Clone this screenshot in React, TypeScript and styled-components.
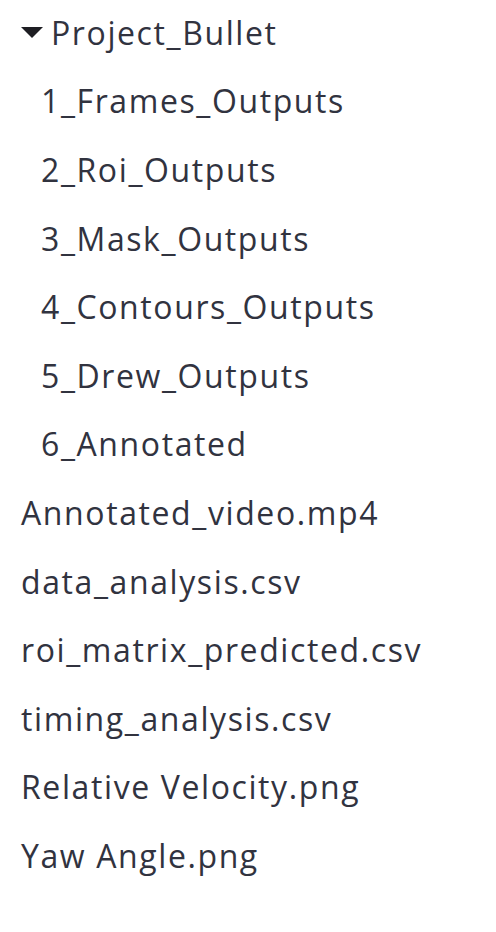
import React from "react";
import styled, { createGlobalStyle } from "styled-components";

const Global = createGlobalStyle`
  html, body { margin: 0; padding: 0; background: #ffffff; }
  body { font-family: "Open Sans", "Liberation Sans", sans-serif; }
`;

const Tree = styled.ul`
  list-style: none;
  margin: -2px 0 0 0;
  padding: 0;
  display: flex;
  flex-direction: column;
`;

const Row = styled.li<{ $indent: number }>`
  height: 68.6px;
  display: flex;
  align-items: center;
  gap: 8px;
  padding-left: ${(p) => p.$indent}px;
  font-size: 32px;
  letter-spacing: 1.6px;
  color: rgb(49, 51, 63);
  white-space: nowrap;
`;

const Caret = styled.svg`
  width: 22px;
  height: 11px;
  flex: none;
  margin-top: 1px;
`;

const folders = [
  "1_Frames_Outputs",
  "2_Roi_Outputs",
  "3_Mask_Outputs",
  "4_Contours_Outputs",
  "5_Drew_Outputs",
  "6_Annotated",
];

const files = [
  "Annotated_video.mp4",
  "data_analysis.csv",
  "roi_matrix_predicted.csv",
  "timing_analysis.csv",
  "Relative Velocity.png",
  "Yaw Angle.png",
];

export default function App() {
  return (
    <>
      <Global />
      <Tree>
        <Row $indent={21}>
          <Caret viewBox="0 0 22 11">
            <polygon points="0,0 22,0 11,11" fill="rgb(30,30,35)" />
          </Caret>
          <span>Project_Bullet</span>
        </Row>
        {folders.map((f) => (
          <Row key={f} $indent={41}>
            {f}
          </Row>
        ))}
        {files.map((f) => (
          <Row key={f} $indent={21}>
            {f}
          </Row>
        ))}
      </Tree>
    </>
  );
}
